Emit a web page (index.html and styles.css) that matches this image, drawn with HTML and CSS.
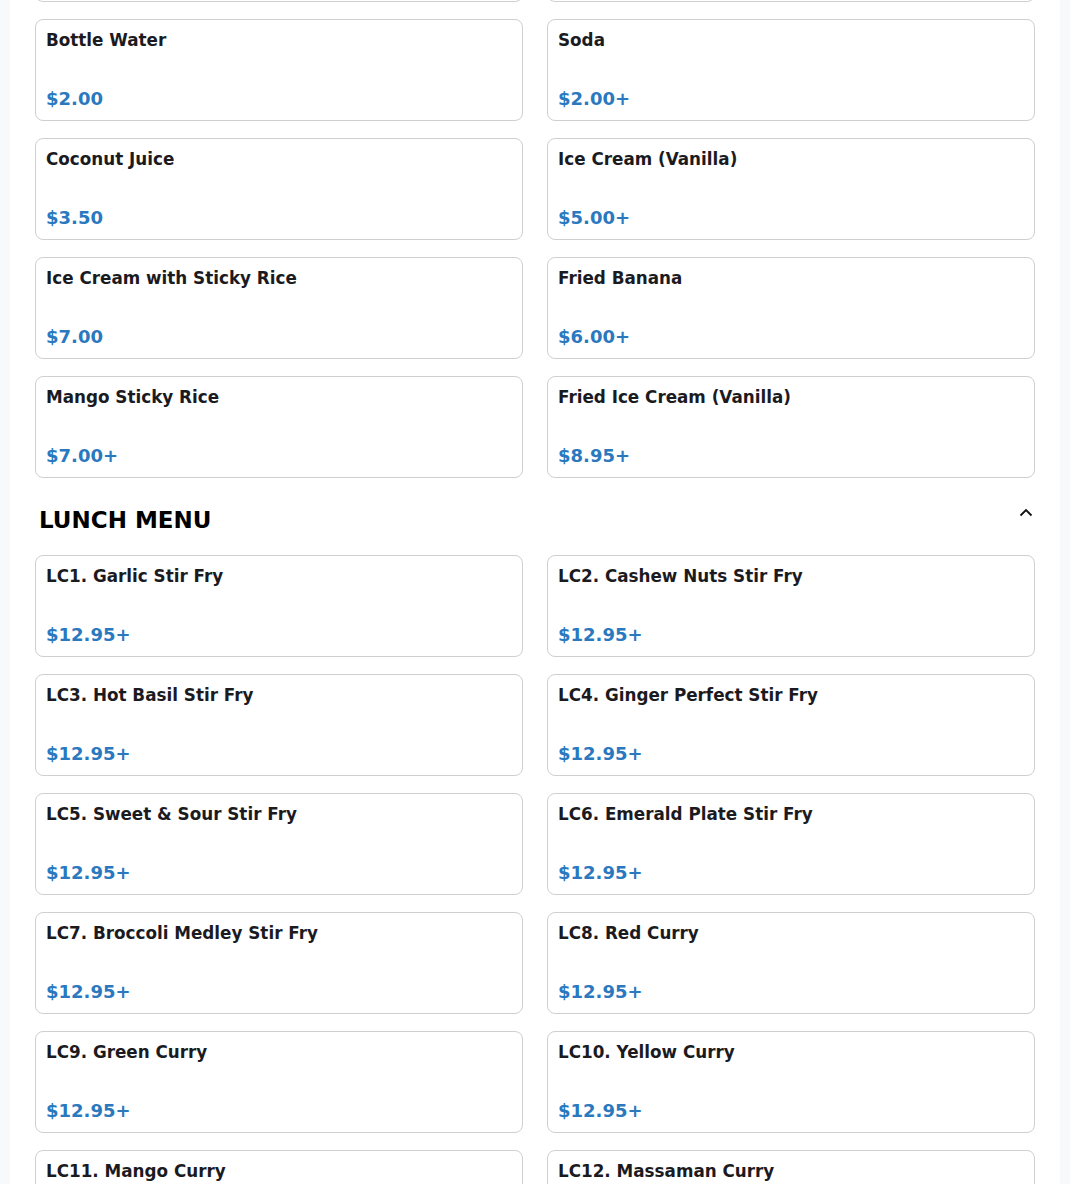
FILE: index.html
```html
<!DOCTYPE html>
<html>
<head>
<meta charset="utf-8">
<link rel="stylesheet" href="styles.css">
</head>
<body>
<div class="page">
  <div class="grid grid-first">
    <div class="card card-hidden"></div>
    <div class="card card-hidden"></div>
    <div class="card"><div class="name">Bottle Water</div><div class="price">$2.00</div></div>
    <div class="card"><div class="name">Soda</div><div class="price">$2.00+</div></div>
    <div class="card"><div class="name">Coconut Juice</div><div class="price">$3.50</div></div>
    <div class="card"><div class="name">Ice Cream (Vanilla)</div><div class="price">$5.00+</div></div>
    <div class="card"><div class="name">Ice Cream with Sticky Rice</div><div class="price">$7.00</div></div>
    <div class="card"><div class="name">Fried Banana</div><div class="price">$6.00+</div></div>
    <div class="card"><div class="name">Mango Sticky Rice</div><div class="price">$7.00+</div></div>
    <div class="card"><div class="name">Fried Ice Cream (Vanilla)</div><div class="price">$8.95+</div></div>
  </div>
  <div class="section-head">
    <h2 class="section-title">LUNCH MENU</h2>
    <svg class="chev" width="14" height="14" viewBox="0 0 14 14"><path d="M1.5 9.5 L7 4 L12.5 9.5" fill="none" stroke="#111" stroke-width="1.8"/></svg>
  </div>
  <div class="grid">
    <div class="card"><div class="name">LC1. Garlic Stir Fry</div><div class="price">$12.95+</div></div>
    <div class="card"><div class="name">LC2. Cashew Nuts Stir Fry</div><div class="price">$12.95+</div></div>
    <div class="card"><div class="name">LC3. Hot Basil Stir Fry</div><div class="price">$12.95+</div></div>
    <div class="card"><div class="name">LC4. Ginger Perfect Stir Fry</div><div class="price">$12.95+</div></div>
    <div class="card"><div class="name">LC5. Sweet &amp; Sour Stir Fry</div><div class="price">$12.95+</div></div>
    <div class="card"><div class="name">LC6. Emerald Plate Stir Fry</div><div class="price">$12.95+</div></div>
    <div class="card"><div class="name">LC7. Broccoli Medley Stir Fry</div><div class="price">$12.95+</div></div>
    <div class="card"><div class="name">LC8. Red Curry</div><div class="price">$12.95+</div></div>
    <div class="card"><div class="name">LC9. Green Curry</div><div class="price">$12.95+</div></div>
    <div class="card"><div class="name">LC10. Yellow Curry</div><div class="price">$12.95+</div></div>
    <div class="card"><div class="name">LC11. Mango Curry</div><div class="price">$12.95+</div></div>
    <div class="card"><div class="name">LC12. Massaman Curry</div><div class="price">$12.95+</div></div>
  </div>
</div>
</body>
</html>
```
FILE: styles.css
```css
html, body {
  margin: 0;
  padding: 0;
  background: #f8f9fa;
  font-family: "DejaVu Sans", sans-serif;
  overflow: hidden;
}
.page {
  width: 1050px;
  margin: 0 auto;
  background: #fff;
  padding: 0 25px 40px 25px;
  box-sizing: border-box;
  min-height: 1184px;
}
.grid {
  display: grid;
  grid-template-columns: 1fr 1fr;
  gap: 17px 24px;
}
.grid-first {
  margin-top: -100px;
}
.card {
  border: 1px solid #cfcfcf;
  border-radius: 8px;
  padding: 10px 10px 11px 10px;
  height: 102px;
  box-sizing: border-box;
  display: flex;
  flex-direction: column;
  justify-content: space-between;
}
.name {
  font-size: 16.8px;
  font-weight: bold;
  color: #1b1b1f;
  line-height: 21px;
}
.price {
  font-size: 18px;
  font-weight: bold;
  color: #2a79bf;
  line-height: 21px;
}
.section-head {
  display: flex;
  align-items: center;
  justify-content: space-between;
  padding: 28px 2px 21px 4px;
}
.section-title {
  margin: 0;
  font-size: 23px;
  font-weight: bold;
  line-height: 28px;
  color: #000;
}
.chev {
  display: block;
  margin-top: -14px;
}
```
